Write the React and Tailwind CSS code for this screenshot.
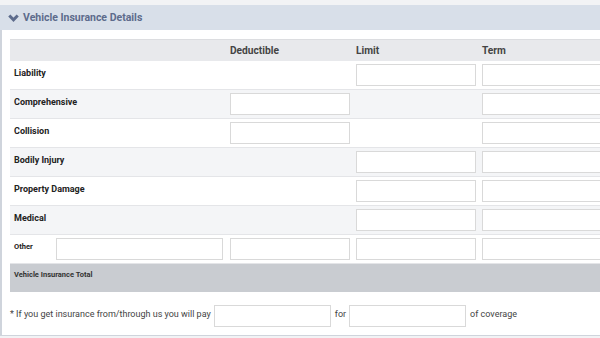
import React from 'react';

const font = { fontFamily: 'Roboto, "Liberation Sans", sans-serif' };

function Box({ className = '' }) {
  return <div className={`h-[22px] border border-[#d9d9d9] bg-white ${className}`} />;
}

const rows = [
  { label: 'Liability', ded: false, limit: true, term: true, bg: 'bg-white' },
  { label: 'Comprehensive', ded: true, limit: false, term: true, bg: 'bg-[#f4f5f7]' },
  { label: 'Collision', ded: true, limit: false, term: true, bg: 'bg-white' },
  { label: 'Bodily Injury', ded: false, limit: true, term: true, bg: 'bg-[#f4f5f7]' },
  { label: 'Property Damage', ded: false, limit: true, term: true, bg: 'bg-white' },
  { label: 'Medical', ded: false, limit: true, term: true, bg: 'bg-[#f4f5f7]' },
];

export default function App() {
  return (
    <div className="w-[600px] h-[338px] overflow-hidden bg-[#f2f3f5] pt-[5px] text-[#333]" style={font}>
      {/* Section header */}
      <div className="h-[25px] bg-[#d8dfe9] flex items-center pl-[8px] gap-[4px] text-[#5d6b8c]">
        <svg width="11" height="9" viewBox="0 0 11 9" className="mt-[1px]">
          <path d="M1.3 1.5 L5.5 5.8 L9.7 1.5" fill="none" stroke="#5d6b8c" strokeWidth="3" />
        </svg>
        <span className="text-[10.5px] font-bold">Vehicle Insurance Details</span>
      </div>

      {/* Panel */}
      <div className="h-[306px] bg-white border-l-2 border-b border-[#cfd4dc] pl-[8px] pt-[9px]">
        <div className="w-[600px]">
          {/* table header */}
          <div className="grid grid-cols-[217px_126px_126px_126px] h-[22px] bg-[#e8e9ec] border-t border-[#dcdde0] items-center text-[10.2px] font-bold text-[#444]">
            <div />
            <div className="pl-[3px]">Deductible</div>
            <div className="pl-[3px]">Limit</div>
            <div className="pl-[3px]">Term</div>
          </div>

          {rows.map((r) => (
            <div
              key={r.label}
              className={`grid grid-cols-[217px_126px_126px_126px] h-[29px] border-b border-[#e4e5e8] ${r.bg}`}
            >
              <div className="pl-[4px] pt-[6px] text-[9px] font-bold text-[#222]">{r.label}</div>
              <div className="pl-[3px] pr-[3px] pt-[3px]">{r.ded && <Box />}</div>
              <div className="pl-[3px] pr-[3px] pt-[3px]">{r.limit && <Box />}</div>
              <div className="pl-[3px] pr-[3px] pt-[3px]">{r.term && <Box />}</div>
            </div>
          ))}

          {/* Other */}
          <div className="grid grid-cols-[217px_126px_126px_126px] h-[29px] bg-white border-b border-[#e4e5e8]">
            <div className="flex pt-[3px]">
              <div className="w-[46px] pl-[4px] pt-[3px] text-[7.5px] font-bold text-[#222]">Other</div>
              <Box className="w-[167px]" />
            </div>
            <div className="pl-[3px] pr-[3px] pt-[3px]"><Box /></div>
            <div className="pl-[3px] pr-[3px] pt-[3px]"><Box /></div>
            <div className="pl-[3px] pr-[3px] pt-[3px]"><Box /></div>
          </div>

          {/* Total */}
          <div className="h-[28px] bg-[#c9ccd1] pl-[4px] pt-[5px] text-[7.5px] font-bold text-[#333]">
            Vehicle Insurance Total
          </div>
        </div>

        {/* footer sentence */}
        <div className="flex items-start mt-[13px] text-[9px] text-[#444]">
          <span className="pt-[3px]">* If you get insurance from/through us you will pay</span>
          <Box className="w-[117px] ml-[3px]" />
          <span className="pt-[3px] ml-[4px]">for</span>
          <Box className="w-[117px] ml-[3px]" />
          <span className="pt-[3px] ml-[4px]">of coverage</span>
        </div>
      </div>
    </div>
  );
}
